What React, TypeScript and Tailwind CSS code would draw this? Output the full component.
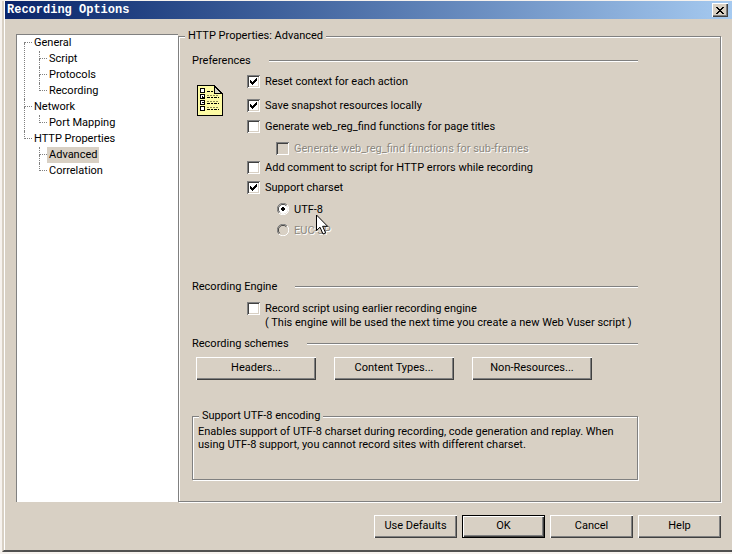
import { useState, type ReactNode } from 'react';
import { clsx } from 'clsx';

interface TreeNode {
  label: string;
  children?: TreeNode[];
}

const TREE: TreeNode[] = [
  { label: 'General', children: [{ label: 'Script' }, { label: 'Protocols' }, { label: 'Recording' }] },
  { label: 'Network', children: [{ label: 'Port Mapping' }] },
  { label: 'HTTP Properties', children: [{ label: 'Advanced' }, { label: 'Correlation' }] },
];

const raised =
  'shadow-[inset_1px_1px_#fff,inset_-1px_-1px_#404040,inset_-2px_-2px_#808080]';
const sunken =
  'shadow-[inset_1px_1px_#808080,inset_-1px_-1px_#fff,inset_2px_2px_#404040,inset_-2px_-2px_#d8d0c4]';
const disabledText = 'text-[#8c8880] [text-shadow:1px_1px_#fff]';

interface TreeItemProps {
  node: TreeNode;
  first: boolean;
  last: boolean;
  selected: string;
  onSelect: (label: string) => void;
}

function TreeItem({ node, first, last, selected, onSelect }: TreeItemProps) {
  return (
    <li className="flex">
      {/* Dotted connector: elbow on top, trunk below */}
      <span className="flex w-2 flex-col">
        <span className={clsx('h-2 border-b border-dotted border-[#808080]', !first && 'border-l')} />
        <span className={clsx('flex-1 border-dotted border-[#808080]', !last && 'border-l')} />
      </span>
      <div>
        <button
          type="button"
          onClick={() => onSelect(node.label)}
          className={clsx('block h-4 px-0.5 leading-4', selected === node.label && 'bg-[#d8d0c4]')}
        >
          {node.label}
        </button>
        {node.children && (
          <ul className="pl-[7px]">
            {node.children.map((child, i) => (
              <TreeItem
                key={child.label}
                node={child}
                first={false}
                last={i === node.children!.length - 1}
                selected={selected}
                onSelect={onSelect}
              />
            ))}
          </ul>
        )}
      </div>
    </li>
  );
}

function GroupBox({ title, className, children }: { title: string; className?: string; children: ReactNode }) {
  return (
    <fieldset
      className={clsx(
        'min-w-0 border border-[#808080] shadow-[1px_1px_#fff,inset_1px_1px_#fff]',
        className,
      )}
    >
      <legend className="ml-1.5 h-4 bg-[#d8d0c4] px-[3px] leading-4">{title}</legend>
      {children}
    </fieldset>
  );
}

function SectionTitle({ title, className }: { title: string; className?: string }) {
  return (
    <div className={clsx('flex h-4 items-center', className)}>
      <h2 className="leading-4">{title}</h2>
      <div className="ml-[18px] h-0.5 flex-1 border-t border-b border-t-[#808080] border-b-white" />
    </div>
  );
}

interface OptionProps {
  label: ReactNode;
  className?: string;
  defaultChecked?: boolean;
  disabled?: boolean;
}

function Checkbox({ label, className, defaultChecked, disabled }: OptionProps) {
  return (
    <label className={clsx('flex min-h-4 items-start gap-[5px]', disabled && disabledText, className)}>
      <span className="grid">
        <input
          type="checkbox"
          defaultChecked={defaultChecked}
          disabled={disabled}
          className={clsx(
            'peer col-start-1 row-start-1 size-[13px] appearance-none bg-white disabled:bg-[#d8d0c4]',
            sunken,
          )}
        />
        <svg
          viewBox="0 0 13 13"
          shapeRendering="crispEdges"
          className="pointer-events-none col-start-1 row-start-1 hidden size-[13px] peer-checked:block"
        >
          <path
            d="M3 5h1v3h-1zM4 6h1v3h-1zM5 7h1v3h-1zM6 6h1v3h-1zM7 5h1v3h-1zM8 4h1v3h-1zM9 3h1v3h-1z"
            fill="#000"
          />
        </svg>
      </span>
      <span className="leading-[14px]">{label}</span>
    </label>
  );
}

function Radio({ label, className, defaultChecked, disabled }: OptionProps) {
  return (
    <label className={clsx('flex min-h-4 items-start gap-[5px]', className)}>
      <span className="grid">
        <input
          type="radio"
          name="charset"
          defaultChecked={defaultChecked}
          disabled={disabled}
          className="peer col-start-1 row-start-1 size-[13px] appearance-none rounded-full"
        />
        <svg viewBox="0 0 12 12" className="pointer-events-none col-start-1 row-start-1 size-3 justify-self-end">
          <circle cx="6" cy="6" r="5" fill={disabled ? '#d8d0c4' : '#fff'} />
          <path d="M1.9 10.1A5.5 5.5 0 0 1 10.1 1.9" fill="none" stroke="#808080" />
          <path d="M2.7 9.3A4.6 4.6 0 0 1 9.3 2.7" fill="none" stroke="#404040" />
          <path d="M10.1 1.9A5.5 5.5 0 0 1 1.9 10.1" fill="none" stroke="#fff" />
        </svg>
        <svg
          viewBox="0 0 12 12"
          shapeRendering="crispEdges"
          className="pointer-events-none col-start-1 row-start-1 hidden size-3 justify-self-end peer-checked:block"
        >
          <path d="M5 4h2v1h1v2h-1v1h-2v-1h-1v-2h1z" fill="#000" />
        </svg>
      </span>
      <span className={clsx('leading-[14px]', disabled && disabledText)}>{label}</span>
    </label>
  );
}

function PushButton({ children, className }: { children: ReactNode; className: string }) {
  return (
    <button type="button" className={clsx('h-[23px] text-center', className)}>
      {children}
    </button>
  );
}

function FormIcon() {
  return (
    <svg viewBox="0 0 26 31" shapeRendering="crispEdges" className="h-[31px] w-[26px]" aria-hidden="true">
      <path d="M.5.5h17l8 8v22h-25z" fill="#fdfba4" stroke="#000" />
      <path d="M17.5.5v8h8z" fill="#d8d8c8" stroke="#000" />
      <path d="M17 .5l8.5 8.5" stroke="#000" strokeWidth="1.4" fill="none" />
      <g fill="#fff" stroke="#000">
        <rect x="3.5" y="3.5" width="4" height="4" rx="1" />
        <rect x="3.5" y="9.5" width="4" height="4" />
        <rect x="3.5" y="15.5" width="4" height="4" rx="1" />
        <rect x="3.5" y="21.5" width="4" height="4" />
      </g>
      <path d="M5 11h1v1h1v1h-2zM5 17h2v1h-2z" fill="#000" />
      <g stroke="#000" fill="none">
        <path d="M10 6.500h6" strokeDasharray="3 1" />
        <path d="M10 12.500h12M10 18.500h12M10 24.500h12" strokeDasharray="3 1 2 1" />
        <path d="M10 10.500h12M10 16.500h12M10 22.500h12" stroke="#8a8850" strokeDasharray="2 1" />
      </g>
    </svg>
  );
}

function Pointer() {
  return (
    <svg viewBox="0 0 13 21" className="pointer-events-none absolute top-[11px] left-[22px] z-10 h-[21px] w-[13px]" aria-hidden="true">
      <path d="M.5 1v15.500l3.500-3.300 3 6.800 2.600-1.200-3-6.500h5z" fill="#fff" stroke="#000" />
    </svg>
  );
}

export default function App() {
  const [selected, setSelected] = useState('Advanced');

  return (
    <div className="flex min-h-screen bg-[#f6f2ee] pt-px pb-0.5 pl-0.5 font-['Roboto','Liberation_Sans',sans-serif] text-[11px] text-black">
      <div className="flex flex-1 flex-col border-b-2 border-l-2 border-b-[#505050] border-l-[#d8d0c4] bg-[#d8d0c4]">
        <div className="flex flex-1 flex-col border-l border-white">
          <header className="flex h-[18px] items-center justify-between bg-linear-to-r from-[#0a246a] to-[#a6caf0] pr-1 pl-0.5">
            <h1 className="font-['Liberation_Mono',monospace] text-[12px] leading-4 font-bold text-white">
              Recording Options
            </h1>
            <button
              type="button"
              aria-label="Close"
              className={clsx('grid h-3.5 w-4 place-items-center bg-[#d8d0c4]', raised)}
            >
              <svg viewBox="0 0 8 7" shapeRendering="crispEdges" className="h-[7px] w-2">
                <path
                  d="M0 0h2v1h1v1h2v-1h1v-1h2v1h-1v1h-1v1h-1v1h1v1h1v1h1v1h-2v-1h-1v-1h-2v1h-1v1h-2v-1h1v-1h1v-1h1v-1h-1v-1h-1v-1h-1z"
                  fill="#000"
                />
              </svg>
            </button>
          </header>

          <main className="flex flex-1 pt-[9px] pr-[11px] pl-[11px]">
            <nav
              aria-label="Option pages"
              className="mt-1.5 w-[162px] shrink-0 border-t border-l border-[#808080] bg-white pl-[7px]"
            >
              <ul>
                {TREE.map((node, i) => (
                  <TreeItem
                    key={node.label}
                    node={node}
                    first={i === 0}
                    last={i === TREE.length - 1}
                    selected={selected}
                    onSelect={setSelected}
                  />
                ))}
              </ul>
            </nav>

            <GroupBox title="HTTP Properties: Advanced" className="flex-1">
              <div className="pt-[9px] pr-[82px] pb-5 pl-[13px]">
                <SectionTitle title="Preferences" />
                <div className="flex pl-[5px]">
                  <div className="mt-4 mr-6">
                    <FormIcon />
                  </div>
                  <div className="mt-1.5">
                    <Checkbox label="Reset context for each action" defaultChecked />
                    <Checkbox label="Save snapshot resources locally" defaultChecked className="mt-2" />
                    <Checkbox label="Generate web_reg_find functions for page titles" className="mt-[5px]" />
                    <Checkbox
                      label="Generate web_reg_find functions for sub-frames"
                      disabled
                      className="mt-1.5 ml-[29px]"
                    />
                    <Checkbox label="Add comment to script for HTTP errors while recording" className="mt-[3px]" />
                    <Checkbox label="Support charset" defaultChecked className="mt-1" />
                    <div className="mt-1.5 ml-[29px]">
                      <Radio
                        defaultChecked
                        label={
                          <span className="relative">
                            UTF-8
                            <Pointer />
                          </span>
                        }
                      />
                      <Radio label="EUC-JP" disabled className="mt-[5px]" />
                    </div>
                  </div>
                </div>

                <SectionTitle title="Recording Engine" className="mt-[39px]" />
                <Checkbox
                  className="mt-[7px] ml-[55px]"
                  label={
                    <>
                      Record script using earlier recording engine
                      <br />( This engine will be used the next time you create a new Web Vuser script )
                    </>
                  }
                />

                <SectionTitle title="Recording schemes" className="mt-1.5" />
                <div className="mt-[5px] flex gap-[18px] pl-1">
                  <PushButton className={clsx('w-[120px]', raised)}>Headers...</PushButton>
                  <PushButton className={clsx('w-[120px]', raised)}>Content Types...</PushButton>
                  <PushButton className={clsx('w-[120px]', raised)}>Non-Resources...</PushButton>
                </div>

                <GroupBox title="Support UTF-8 encoding" className="mt-7">
                  <p className="px-[5px] pt-px pb-7 leading-[13px]">
                    Enables support of UTF-8 charset during recording, code generation and replay. When using UTF-8
                    support, you cannot record sites with different charset.
                  </p>
                </GroupBox>
              </div>
            </GroupBox>
          </main>

          <footer className="flex justify-end gap-[5px] pt-[13px] pr-[11px] pb-3">
            <PushButton className={clsx('w-[83px]', raised)}>Use Defaults</PushButton>
            <PushButton className="w-[83px] border border-black shadow-[inset_1px_1px_#fff,inset_-1px_-1px_#404040,inset_-2px_-2px_#808080]">
              OK
            </PushButton>
            <PushButton className={clsx('w-[83px]', raised)}>Cancel</PushButton>
            <PushButton className={clsx('w-[83px]', raised)}>Help</PushButton>
          </footer>
        </div>
      </div>
    </div>
  );
}
